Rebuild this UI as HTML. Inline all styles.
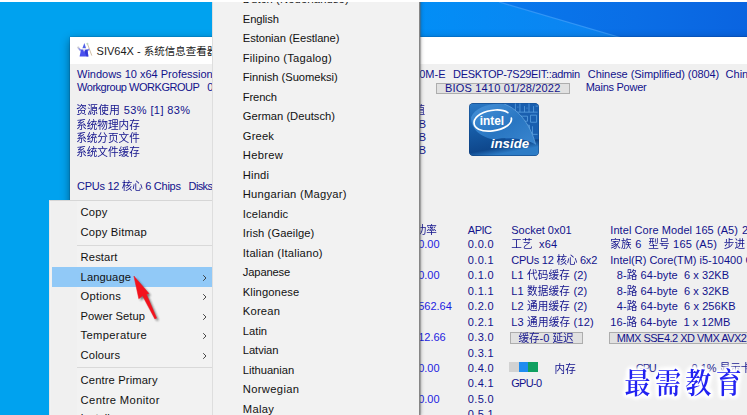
<!DOCTYPE html>
<html><head><meta charset="utf-8"><title>SIV64X</title>
<style>
html,body{margin:0;padding:0}
body{width:747px;height:415px;overflow:hidden;position:relative;background:#00a2ef;font-family:"Liberation Sans","Noto Sans CJK SC",sans-serif}
.abs,.t,.m{position:absolute;white-space:nowrap}
.t{font-size:11px;line-height:13px;color:#12128c;font-family:"Liberation Sans","Noto Sans CJK SC",sans-serif}
.t.b{color:#1c1ce0}
.k{font-size:10.6px;display:inline-block;transform:scaleY(1.08);transform-origin:50% 30%}
.m{font-size:11.2px;line-height:19px;color:#111}
.btn{position:absolute;box-sizing:border-box;background:#e1e1e1;border:1px solid #adadad}
.sep{position:absolute;height:1px;background:#d9d9d9}
.chev{position:absolute;width:5px;height:8px}
</style></head><body>
<svg class="abs" style="left:418px;top:2px" width="329" height="36" viewBox="418 2 329 36">
<defs><linearGradient id="ga" x1="418" y1="0" x2="620" y2="0" gradientUnits="userSpaceOnUse"><stop offset="0" stop-color="#028ef6"/><stop offset="1" stop-color="#0e82f0"/></linearGradient>
<linearGradient id="gb" x1="500" y1="0" x2="747" y2="0" gradientUnits="userSpaceOnUse"><stop offset="0" stop-color="#0878ec"/><stop offset=".55" stop-color="#0a6ee6"/><stop offset="1" stop-color="#0a64e0"/></linearGradient></defs>
<rect x="418" y="2" width="329" height="36" fill="url(#gb)"/>
<polygon points="418,2 499,2 622,38 418,38" fill="url(#ga)"/>
<path d="M499 2 L622 38" stroke="#3c9cf8" stroke-width="1.3" opacity=".8"/></svg>
<div class="abs" style="left:70.4px;top:37px;width:700px;height:400px;background:#f0f0f0;box-shadow:0 0 1px rgba(0,0,40,.6),0 3px 9px rgba(0,0,0,.45)"></div>
<div class="abs" style="left:70.4px;top:37px;width:700px;height:26.5px;background:#fff"></div>
<svg class="abs" style="left:76px;top:41px" width="20" height="18" viewBox="76 41 20 18">
<path d="M87.3 43.4 L91.8 55.6" stroke="#c9b59a" stroke-width="0.9" fill="none"/>
<circle cx="87.4" cy="43.8" r="1" fill="#b9d8c0"/>
<path d="M84.4 43 L82.4 48.2 L86 48.2 Z" fill="#4f60e6"/>
<path d="M81.2 49.6 L78.4 47.2 L77.8 48.6 L80.4 51.6 Z" fill="#8f95e8"/>
<circle cx="78.3" cy="47.6" r="1.1" fill="#c8c8d0"/>
<path d="M86.8 49.8 L89 48.6 L89.4 50 L87.4 51.6 Z" fill="#7c84ea"/>
<path d="M81 49.4 L87.4 49.4 L88.4 56.6 L79.6 56.6 Z" fill="#4a50ee"/>
<path d="M82.6 48.2 L85.8 48.2 L84.2 52.4 Z" fill="#e4e4ee"/>
<path d="M84.2 51 L86.6 56.6 L88.4 56.6 L87.4 49.4 Z" fill="#2a2fd0" opacity=".7"/>
</svg>
<span class="abs" style="left:96.6px;top:43px;font-size:11px;line-height:16px;color:#1a1a1a">SIV64X - <span style="font-size:10.5px">系统信息查看器</span></span>
<div class="btn" style="left:436px;top:82.5px;width:134px;height:11px"></div>
<div class="btn" style="left:510px;top:332px;width:73px;height:11.5px"></div>
<div class="btn" style="left:609px;top:332px;width:160px;height:11.5px"></div>
<div class="abs" style="left:509px;top:361.5px;width:10px;height:10.5px;background:#d2d2d2"></div>
<div class="abs" style="left:519px;top:361.5px;width:9px;height:10.5px;background:#1e8cf0"></div>
<div class="abs" style="left:528px;top:361.5px;width:9.7px;height:10.5px;background:#10a060"></div>
<svg class="abs" style="left:469px;top:102.5px" width="70" height="53" viewBox="0 0 69.4 52.4">
<defs><linearGradient id="ig" x1="0" y1="0" x2="0.25" y2="1"><stop offset="0" stop-color="#2c7ac6"/><stop offset=".45" stop-color="#175ea9"/><stop offset=".88" stop-color="#0e478c"/><stop offset="1" stop-color="#2d7cc6"/></linearGradient>
<linearGradient id="il" x1="0" y1="0" x2="1" y2="1"><stop offset="0" stop-color="#4792d8"/><stop offset=".55" stop-color="#2976c2"/><stop offset="1" stop-color="#3a86cf"/></linearGradient>
<clipPath id="ic"><rect x="0.4" y="0.4" width="68.6" height="51.6" rx="4"/></clipPath></defs>
<rect x="0" y="0" width="69.4" height="52.4" rx="4.2" fill="#0c3a76"/>
<g clip-path="url(#ic)"><rect width="70" height="53" fill="url(#ig)"/>
<rect x="36" y="0" width="34" height="36" fill="#1a5faf"/>
<g fill="none" stroke="#5da3e2" stroke-width=".9" opacity=".85"><path d="M46 0v9M50.5 0v9M55 3v6M59.5 0v9M64 3v6M46 9h22M50 13h8v5h-8zM61 12h6v7h-6zM54 22h6v5M63 23v8h5M66 3h3M48 4h1M57 5h1"/></g>
<path d="M2 14 C6 4 22 -1 35 1 C50 6 62 24 66 41 C56 35 40 33 25 36 C12 34 2 26 2 14Z" fill="url(#il)"/>
<path d="M35 1 C50 6 62 24 66 41" fill="none" stroke="#7ab6ea" stroke-width=".8" opacity=".7"/>
<path d="M38.5 9.5 C33 5.5 20 6 11 11 C3.5 15.5 3 22.5 9.5 26 C17 29.5 30 28 38 22.5 C41 20.3 42.5 17.5 42 15" fill="none" stroke="#fff" stroke-width="1.7" stroke-linecap="round"/>
</g>
<text x="10.6" y="21.7" font-family="Liberation Sans, sans-serif" font-weight="700" font-size="12.5" fill="#fff" textLength="24.2" lengthAdjust="spacingAndGlyphs">intel</text>
<text x="21.6" y="44.2" font-family="Liberation Sans, sans-serif" font-weight="700" font-style="italic" font-size="13.5" fill="#fff" textLength="38" lengthAdjust="spacingAndGlyphs">inside</text>
</svg>
<span class="t" style="left:77px;top:68px">Windows 10 x64 Professional</span>
<span class="t" style="left:77px;top:81px;letter-spacing:-0.46px">Workgroup WORKGROUP</span>
<span class="t" style="left:207.3px;top:81px">0</span>
<span class="t" style="left:76.2px;top:104px;letter-spacing:0.41px"><span class="k">资源使用</span> 53% [1] 83%</span>
<span class="t" style="left:76.2px;top:119px"><span class="k">系统物理内存</span></span>
<span class="t" style="left:76.2px;top:132px"><span class="k">系统分页文件</span></span>
<span class="t" style="left:76.2px;top:146px"><span class="k">系统文件缓存</span></span>
<span class="t" style="left:77px;top:180px;letter-spacing:-0.28px">CPUs 12 <span class="k">核心</span> 6 Chips</span>
<span class="t" style="left:188.6px;top:180px;letter-spacing:-0.64px">Disks</span>
<span class="t" style="left:413.1px;top:68px">10M-E</span>
<span class="t" style="left:453.1px;top:68px;letter-spacing:-0.32px">DESKTOP-7S29EIT::admin</span>
<span class="t" style="left:587.8px;top:68px;letter-spacing:-0.07px">Chinese (Simplified) (0804)</span>
<span class="t" style="left:725.6px;top:68px">China</span>
<span class="t" style="left:445.1px;top:82px;letter-spacing:0.17px">BIOS 1410 01/28/2022</span>
<span class="t" style="left:585.7px;top:81px;letter-spacing:-0.26px">Mains Power</span>
<span class="t" style="left:414.5px;top:104px"><span class="k">值</span></span>
<span class="t" style="left:418.8px;top:118px">B</span>
<span class="t" style="left:418.8px;top:131px">B</span>
<span class="t" style="left:418.8px;top:144px">B</span>
<span class="t" style="left:467.8px;top:224px;letter-spacing:-0.50px">APIC</span>
<span class="t" style="left:415.7px;top:224px"><span class="k">功率</span></span>
<span class="t" style="left:511.2px;top:224px">Socket 0x01</span>
<span class="t" style="left:610.3px;top:224px;letter-spacing:0.07px">Intel Core Model 165 (A5)</span>
<span class="t" style="left:467.8px;top:238px;letter-spacing:0.33px">0.0.0</span>
<span class="t b" style="left:418.2px;top:238px">0.00</span>
<span class="t" style="left:511.2px;top:238px;letter-spacing:0.15px"><span class="k">工艺</span> &nbsp;x64</span>
<span class="t" style="left:610.3px;top:238px;letter-spacing:0.23px"><span class="k">家族</span> 6 &nbsp;<span class="k">型号</span> 165 (A5) &nbsp;<span class="k">步进</span></span>
<span class="t" style="left:467.8px;top:254px;letter-spacing:0.33px">0.0.1</span>
<span class="t" style="left:511.2px;top:254px;letter-spacing:-0.23px">CPUs 12 <span class="k">核心</span> 6x2</span>
<span class="t" style="left:610.3px;top:254px">Intel(R) Core(TM) i5-10400 CPU</span>
<span class="t" style="left:467.8px;top:269px;letter-spacing:0.33px">0.1.0</span>
<span class="t b" style="left:418.2px;top:269px">0.00</span>
<span class="t" style="left:511.2px;top:269px;letter-spacing:0.18px">L1 <span class="k">代码缓存</span> (2)</span>
<span class="t" style="left:616.8px;top:269px;letter-spacing:0.07px">8-<span class="k">路</span> 64-byte &nbsp;6 x 32KB</span>
<span class="t" style="left:467.8px;top:285px;letter-spacing:0.33px">0.1.1</span>
<span class="t" style="left:511.2px;top:285px;letter-spacing:0.18px">L1 <span class="k">数据缓存</span> (2)</span>
<span class="t" style="left:616.8px;top:285px;letter-spacing:0.07px">8-<span class="k">路</span> 64-byte &nbsp;6 x 32KB</span>
<span class="t" style="left:467.8px;top:300px;letter-spacing:0.33px">0.2.0</span>
<span class="t b" style="left:418.2px;top:300px">562.64</span>
<span class="t" style="left:511.2px;top:300px;letter-spacing:0.18px">L2 <span class="k">通用缓存</span> (2)</span>
<span class="t" style="left:616.8px;top:300px;letter-spacing:0.08px">4-<span class="k">路</span> 64-byte &nbsp;6 x 256KB</span>
<span class="t" style="left:467.8px;top:316px;letter-spacing:0.33px">0.2.1</span>
<span class="t" style="left:511.2px;top:316px;letter-spacing:0.21px">L3 <span class="k">通用缓存</span> (12)</span>
<span class="t" style="left:610.3px;top:316px;letter-spacing:0.06px">16-<span class="k">路</span> 64-byte &nbsp;1 x 12MB</span>
<span class="t" style="left:467.8px;top:331px;letter-spacing:0.33px">0.3.0</span>
<span class="t b" style="left:418.2px;top:331px">12.66</span>
<span class="t" style="left:467.8px;top:347px;letter-spacing:0.33px">0.3.1</span>
<span class="t" style="left:467.8px;top:362px;letter-spacing:0.33px">0.4.0</span>
<span class="t b" style="left:418.2px;top:362px">0.00</span>
<span class="t" style="left:467.8px;top:377px;letter-spacing:0.33px">0.4.1</span>
<span class="t" style="left:511.2px;top:377px;letter-spacing:-0.69px">GPU-0</span>
<span class="t" style="left:467.8px;top:393px;letter-spacing:0.33px">0.5.0</span>
<span class="t b" style="left:418.2px;top:393px">0.00</span>
<span class="t" style="left:467.8px;top:408px;letter-spacing:0.33px">0.5.1</span>
<span class="t" style="left:518.4px;top:332px"><span class="k">缓存</span>-0 <span class="k">延迟</span></span>
<span class="t" style="left:616.8px;top:332px;letter-spacing:-0.52px">MMX SSE4.2 XD VMX AVX2</span>
<span class="t" style="left:742px;top:224px">2</span>
<span class="t" style="left:554.6px;top:363px"><span class="k">内存</span></span>
<span class="t" style="left:635.8px;top:362px;letter-spacing:-1.48px">GPU</span>
<span class="t" style="left:691.5px;top:362px">0.1% <span class="k">显示卡</span></span>
<span class="abs" style="left:624.5px;top:363.5px;font-family:'Noto Serif CJK SC','Liberation Serif',serif;font-weight:600;font-size:26px;line-height:38px;letter-spacing:4.4px;color:#2222f2;transform:scaleY(1.12);transform-origin:0 82%;text-shadow:0 0 2px #fff,0 0 2px #fff,0 0 2px #fff,0 0 2px #fff,0 0 4px #fff,0 0 4px #fff,0 0 4px #fff,0 0 4px #fff,0 0 4px #fff,0 0 4px #fff,0 0 4px #fff,0 0 4px #fff,0 0 6px #fff,0 0 6px #fff,0 0 6px #fff,0 0 6px #fff">最需教育</span>
<div class="abs" style="left:49.3px;top:200px;width:170px;height:230px;background:#f2f2f2;border:1px solid #e6e6e6;border-top-color:#d6d6d6;box-sizing:border-box"></div>
<div class="abs" style="left:51px;top:201px;width:26px;height:230px;background:#f0f0f0"></div>
<div class="abs" style="left:52px;top:267.3px;width:160px;height:19.5px;background:#91c9f7"></div>
<div class="sep" style="left:77px;top:244.7px;width:136px"></div>
<div class="sep" style="left:77px;top:367.3px;width:136px"></div>
<svg class="chev" style="left:201.5px;top:273.9px" viewBox="0 0 5 8"><path d="M1.2 1.2 L4 4 L1.2 6.8" fill="none" stroke="#333" stroke-width="0.9"/></svg>
<svg class="chev" style="left:201.5px;top:293.4px" viewBox="0 0 5 8"><path d="M1.2 1.2 L4 4 L1.2 6.8" fill="none" stroke="#333" stroke-width="0.9"/></svg>
<svg class="chev" style="left:201.5px;top:312.9px" viewBox="0 0 5 8"><path d="M1.2 1.2 L4 4 L1.2 6.8" fill="none" stroke="#333" stroke-width="0.9"/></svg>
<svg class="chev" style="left:201.5px;top:332.4px" viewBox="0 0 5 8"><path d="M1.2 1.2 L4 4 L1.2 6.8" fill="none" stroke="#333" stroke-width="0.9"/></svg>
<svg class="chev" style="left:201.5px;top:351.9px" viewBox="0 0 5 8"><path d="M1.2 1.2 L4 4 L1.2 6.8" fill="none" stroke="#333" stroke-width="0.9"/></svg>
<span class="m" style="left:80.6px;top:203px;letter-spacing:0.19px">Copy</span>
<span class="m" style="left:80.6px;top:223px;letter-spacing:0.20px">Copy Bitmap</span>
<span class="m" style="left:80.6px;top:248px;letter-spacing:0.12px">Restart</span>
<span class="m" style="left:80.6px;top:268px;letter-spacing:0.08px">Language</span>
<span class="m" style="left:80.6px;top:287px;letter-spacing:0.28px">Options</span>
<span class="m" style="left:80.6px;top:307px;letter-spacing:0.02px">Power Setup</span>
<span class="m" style="left:80.6px;top:326px;letter-spacing:0.34px">Temperature</span>
<span class="m" style="left:80.6px;top:346px;letter-spacing:0.15px">Colours</span>
<span class="m" style="left:80.6px;top:371px;letter-spacing:0.13px">Centre Primary</span>
<span class="m" style="left:80.6px;top:391px;letter-spacing:0.37px">Centre Monitor</span>
<span class="m" style="left:80.6px;top:409px">Install</span>
<div class="abs" style="left:211.5px;top:0;width:207.3px;height:415px;box-sizing:border-box;border-left:1px solid #dedede;background:#f2f2f2;box-shadow:1px 0 0 #868686,2px 0 1px rgba(100,100,100,.45),3px 0 3px rgba(0,0,0,.15)"></div>
<span class="m" style="left:242.8px;top:-10px;letter-spacing:0.15px">Dutch (Nederlandse)</span>
<span class="m" style="left:242.8px;top:10px;letter-spacing:-0.09px">English</span>
<span class="m" style="left:242.8px;top:29px;letter-spacing:-0.06px">Estonian (Eestlane)</span>
<span class="m" style="left:242.8px;top:49px;letter-spacing:0.22px">Filipino (Tagalog)</span>
<span class="m" style="left:242.8px;top:68px;letter-spacing:-0.05px">Finnish (Suomeksi)</span>
<span class="m" style="left:242.8px;top:88px;letter-spacing:-0.15px">French</span>
<span class="m" style="left:242.8px;top:107px;letter-spacing:0.01px">German (Deutsch)</span>
<span class="m" style="left:242.8px;top:127px;letter-spacing:0.17px">Greek</span>
<span class="m" style="left:242.8px;top:146px;letter-spacing:0.32px">Hebrew</span>
<span class="m" style="left:242.8px;top:166px;letter-spacing:0.18px">Hindi</span>
<span class="m" style="left:242.8px;top:185px;letter-spacing:0.24px">Hungarian (Magyar)</span>
<span class="m" style="left:242.8px;top:205px;letter-spacing:0.15px">Icelandic</span>
<span class="m" style="left:242.8px;top:224px;letter-spacing:0.09px">Irish (Gaeilge)</span>
<span class="m" style="left:242.8px;top:244px;letter-spacing:0.19px">Italian (Italiano)</span>
<span class="m" style="left:242.8px;top:263px;letter-spacing:-0.15px">Japanese</span>
<span class="m" style="left:242.8px;top:283px;letter-spacing:0.11px">Klingonese</span>
<span class="m" style="left:242.8px;top:302px;letter-spacing:0.20px">Korean</span>
<span class="m" style="left:242.8px;top:322px;letter-spacing:0.01px">Latin</span>
<span class="m" style="left:242.8px;top:341px;letter-spacing:-0.07px">Latvian</span>
<span class="m" style="left:242.8px;top:361px;letter-spacing:-0.03px">Lithuanian</span>
<span class="m" style="left:242.8px;top:380px;letter-spacing:0.34px">Norwegian</span>
<span class="m" style="left:242.8px;top:400px;letter-spacing:0.29px">Malay</span>
<svg class="abs" style="left:120px;top:266px" width="54" height="64" viewBox="120 266 54 64">
<defs><filter id="ab" x="-30%" y="-30%" width="160%" height="160%"><feGaussianBlur stdDeviation="1.3"/></filter></defs>
<path d="M133.9 276 L138.8 298.7 L142.6 295.8 L154.9 318.9 L156.6 318.1 L146.4 294.3 L148.9 293.5 Z" fill="#222" opacity=".6" filter="url(#ab)" transform="translate(2,2)"/>
<path d="M133.9 276 L138.8 298.7 L142.6 295.8 L154.9 318.9 L156.6 318.1 L146.4 294.3 L148.9 293.5 Z" fill="#f3121d" stroke="#f3121d" stroke-width=".5" stroke-linejoin="round"/></svg>
<div class="abs" style="left:0;top:0;width:747px;height:2px;background:#fff"></div>
</body></html>
